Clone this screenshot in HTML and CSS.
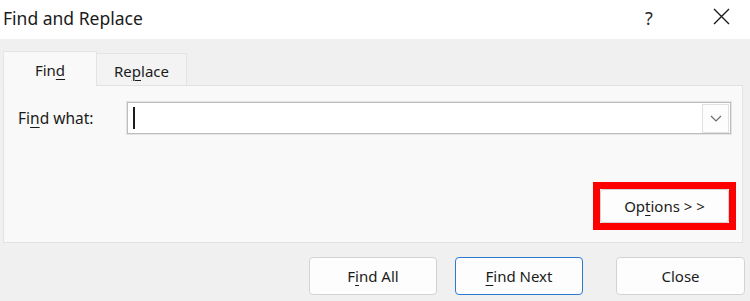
FILE: index.html
```html
<!DOCTYPE html>
<html>
<head>
<meta charset="utf-8">
<link rel="stylesheet" href="styles.css">
</head>
<body>
<div class="dialog">
  <div class="titlebar">
    <div class="title">Find and Replace</div>
    <div class="help">?</div>
    <div class="close-x">
      <svg width="17" height="17" viewBox="0 0 17 17"><path d="M1 1 L16 16 M16 1 L1 16" stroke="#1b1b1b" stroke-width="1.4" fill="none"/></svg>
    </div>
  </div>
  <div class="body">
    <div class="tabs">
      <div class="tab active">Fin<u>d</u></div>
      <div class="tab">Re<u>p</u>lace</div>
    </div>
    <div class="panel">
      <div class="row">
        <label class="label">Fi<u>n</u>d what:</label>
        <div class="combo">
          <div class="caret"></div>
          <div class="drop">
            <svg width="12" height="7" viewBox="0 0 12 7"><path d="M1 1 L6 6 L11 1" stroke="#6b6b6b" stroke-width="1.2" fill="none"/></svg>
          </div>
        </div>
      </div>
      <div class="opt-row">
        <div class="highlight">
          <div class="btn opt">Op<u>t</u>ions &gt; &gt;</div>
        </div>
      </div>
    </div>
    <div class="buttons">
      <div class="btn">F<u>i</u>nd All</div>
      <div class="btn primary"><u>F</u>ind Next</div>
      <div class="btn close">Close</div>
    </div>
  </div>
</div>
</body>
</html>
```
FILE: styles.css
```css
* { box-sizing: border-box; }
html, body { margin: 0; padding: 0; }
body {
  width: 750px;
  height: 301px;
  overflow: hidden;
  font-family: "Noto Sans", "Open Sans", sans-serif;
  color: #1b1b1b;
  background: #f0f0f0;
}
u { text-decoration-thickness: 1px; text-underline-offset: 3px; }
.dialog { width: 750px; height: 301px; display: flex; flex-direction: column; }
.titlebar {
  height: 39px;
  background: #ffffff;
  display: flex;
  align-items: center;
  padding-left: 3px;
}
.title { font-size: 17.5px; flex: 1; margin-top: -3px; }
.help { font-size: 18px; width: 20px; margin-right: 48px; margin-top: -4px; color: #2a2a2a; }
.close-x { width: 17px; height: 17px; margin-right: 20px; margin-top: -6px; display: flex; }
.body { flex: 1; padding-top: 12px; }
.tabs { display: flex; align-items: flex-end; padding-left: 3px; height: 34px; position: relative; z-index: 1; }
.tab {
  font-size: 15px;
  display: flex;
  align-items: center;
  justify-content: center;
}
.tab.active {
  width: 94px;
  height: 35px;
  margin-bottom: -1px;
  background: #f9f9f9;
  border: 1px solid #e4e4e4;
  border-bottom: none;
  padding-top: 2px;
}
.tab:not(.active) {
  width: 90px;
  height: 32px;
  background: #f3f3f3;
  border: 1px solid #e4e4e4;
  border-left: none;
  border-bottom: none;
  padding-top: 2px;
}
.panel {
  margin: 0 7px 0 3px;
  height: 158px;
  background: #f9f9f9;
  border: 1px solid #e2e2e2;
  display: flex;
  flex-direction: column;
}
.row { display: flex; align-items: center; margin-top: 16px; }
.label { font-size: 15.5px; width: 123px; flex: none; padding-left: 14px; }
.combo {
  width: 604px;
  flex: none;
  height: 32px;
  background: #ffffff;
  border: 1px solid #bdbdbd;
  box-shadow: 0 0 0 1px #e4e4e4;
  display: flex;
  align-items: center;
  justify-content: space-between;
  padding: 0 1px 0 5px;
}
.caret { width: 2px; height: 22px; background: #1b1b1b; }
.drop {
  width: 27px;
  height: 29px;
  border: 1px solid #e1e1e1;
  display: flex;
  align-items: center;
  justify-content: center;
  background: #fdfdfd;
}
.opt-row { display: flex; justify-content: flex-end; margin-top: 48px; padding-right: 6px; }
.highlight { border: 7px solid #ff0000; width: 143px; height: 48px; }
.btn {
  font-size: 15px;
  background: #fdfdfd;
  border: 1px solid #d3d3d3;
  border-radius: 4px;
  width: 128px;
  height: 38px;
  display: flex;
  align-items: center;
  justify-content: center;
}
.btn.opt { width: 100%; height: 100%; padding-top: 0; border-radius: 3px; }
.buttons { display: flex; margin-top: 14px; padding-left: 309px; }
.buttons .btn + .btn { margin-left: 18px; }
.btn.primary { border: 1px solid #2a7ad0; }
.buttons .btn.close { margin-left: 33px; width: 129px; }
```
